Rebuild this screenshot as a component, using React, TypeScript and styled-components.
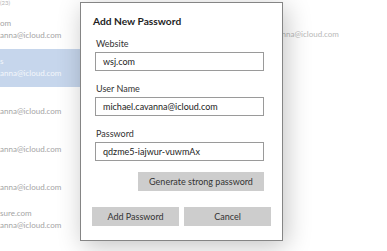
import React from "react";
import styled, { createGlobalStyle } from "styled-components";

const Global = createGlobalStyle`
  html, body { margin: 0; padding: 0; background: #ffffff; overflow: hidden; }
  body { font-family: Lato, "Open Sans", sans-serif; }
  #root { width: 387px; height: 251px; }
`;

const Stage = styled.div`
  position: relative;
  width: 387px;
  height: 251px;
  overflow: hidden;
  background: #ffffff;
`;

const Backdrop = styled.div`
  display: flex;
  height: 100%;
`;

const List = styled.div`
  flex: 0 0 220px;
  display: flex;
  flex-direction: column;
`;

const ListHeader = styled.div`
  height: 11px;
  font-size: 6px;
  line-height: 6px;
  color: #b4b4b4;
`;

const Row = styled.div<{ $selected?: boolean }>`
  height: 38px;
  box-sizing: border-box;
  padding: 7px 0 0 0;
  background: ${(p) => (p.$selected ? "#c6d6ec" : "transparent")};
  color: ${(p) => (p.$selected ? "#f4f7fb" : "#a4a4a4")};
  font-size: 8px;
  line-height: 11.5px;
  white-space: nowrap;
`;

const Line = styled.div``;

const Detail = styled.div`
  flex: 1;
  padding: 28px 0 0 17px;
  font-size: 8px;
  line-height: 12px;
  color: #b8b8b8;
  white-space: nowrap;
`;

const Dialog = styled.div`
  position: absolute;
  left: 80px;
  top: 2px;
  width: 203px;
  height: 239px;
  box-sizing: border-box;
  background: #ffffff;
  border: 1px solid #858585;
  box-shadow: 3px 5px 24px rgba(0, 0, 0, 0.24);
  display: flex;
  flex-direction: column;
  padding: 11px 0 0 0;
  color: #2a2a2a;
`;

const Title = styled.div`
  padding-left: 12px;
  font-size: 10.2px;
  font-weight: 700;
  line-height: 14px;
  color: #1e1e1e;
`;

const Field = styled.div`
  display: flex;
  flex-direction: column;
  gap: 2px;
  margin: 10px 18px 0 14px;
  & + & { margin-top: 12px; }
`;

const Label = styled.div`
  padding-left: 1px;
  font-size: 9px;
  line-height: 12px;
  color: #333333;
`;

const Input = styled.div`
  height: 19px;
  box-sizing: border-box;
  border: 1px solid #9a9a9a;
  padding-left: 7px;
  font-size: 9px;
  line-height: 17px;
  color: #222222;
  white-space: nowrap;
`;

const Button = styled.div<{ $width?: number }>`
  height: 19px;
  width: ${(p) => (p.$width ? `${p.$width}px` : "auto")};
  flex: ${(p) => (p.$width ? "none" : "1")};
  background: #cdcdcd;
  font-size: 9px;
  line-height: 19px;
  text-align: center;
  color: #333333;
  white-space: nowrap;
`;

const GenerateRow = styled.div`
  display: flex;
  justify-content: flex-end;
  margin: 11px 18px 0 0;
`;

const Actions = styled.div`
  display: flex;
  gap: 5px;
  margin: 16px 11px 0 11px;
`;

const rows = [
  { site: "om", selected: false },
  { site: "s", selected: true },
  { site: "", selected: false },
  { site: "", selected: false },
  { site: "", selected: false },
  { site: "sure.com", selected: false },
];

export default function App() {
  return (
    <Stage>
      <Global />
      <Backdrop>
        <List>
          <ListHeader>(23)</ListHeader>
          {rows.map((r, i) => (
            <Row key={i} $selected={r.selected}>
              <Line>{r.site || "\u00a0"}</Line>
              <Line>anna@icloud.com</Line>
            </Row>
          ))}
        </List>
        <Detail>michael.cavanna@icloud.com</Detail>
      </Backdrop>
      <Dialog>
        <Title>Add New Password</Title>
        <Field>
          <Label>Website</Label>
          <Input>wsj.com</Input>
        </Field>
        <Field>
          <Label>User Name</Label>
          <Input>michael.cavanna@icloud.com</Input>
        </Field>
        <Field>
          <Label>Password</Label>
          <Input>qdzme5-iajwur-vuwmAx</Input>
        </Field>
        <GenerateRow>
          <Button $width={126}>Generate strong password</Button>
        </GenerateRow>
        <Actions>
          <Button>Add Password</Button>
          <Button>Cancel</Button>
        </Actions>
      </Dialog>
    </Stage>
  );
}
